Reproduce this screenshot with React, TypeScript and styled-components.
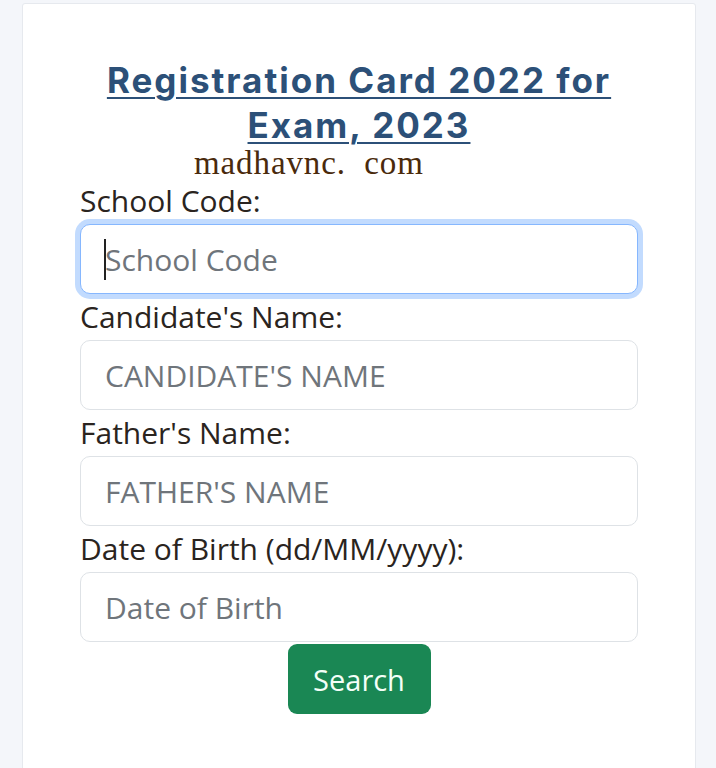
import React from "react";
import styled, { createGlobalStyle } from "styled-components";

const Global = createGlobalStyle`
  html, body { margin: 0; padding: 0; background: #f4f6fa; }
  body { font-family: "Open Sans", "Liberation Sans", sans-serif; }
  * { box-sizing: border-box; }
`;

const Page = styled.div`
  width: 716px;
  height: 768px;
  overflow: hidden;
  padding: 3px 20px 0 22px;
  background: #f4f6fa;
`;

const Card = styled.div`
  background: #ffffff;
  border: 1px solid #e6e9ee;
  border-radius: 3px;
  height: 800px;
  padding: 54px 57px 0 57px;
  display: flex;
  flex-direction: column;
`;

const Title = styled.h1`
  margin: 0;
  text-align: center;
  font-family: Inter, "Open Sans", sans-serif;
  font-weight: 700;
  font-size: 35px;
  line-height: 45px;
  color: #2c5078;
  text-decoration: underline;
  text-decoration-thickness: 2px;
  text-underline-offset: 4px;
  letter-spacing: 2px;
`;

const Watermark = styled.div`
  font-family: "Liberation Serif", "DejaVu Serif", serif;
  font-size: 33px;
  line-height: 30px;
  height: 30px;
  color: #4a2a0c;
  padding-left: 114px;
  white-space: pre;
  letter-spacing: 0.9px;
`;

const Field = styled.div`
  display: flex;
  flex-direction: column;
`;

const Label = styled.label`
  font-size: 30px;
  line-height: 46px;
  color: #2a2420;
`;

const Input = styled.input<{ $focused?: boolean }>`
  width: 100%;
  height: 70px;
  border: 1px solid ${(p) => (p.$focused ? "#86b7fe" : "#dee2e6")};
  border-radius: 10px;
  padding: 0 24px;
  font-family: "Open Sans", sans-serif;
  font-size: 30px;
  color: #212529;
  background: #fff;
  outline: none;
  box-shadow: ${(p) => (p.$focused ? "0 0 0 5px rgba(13,110,253,0.25)" : "none")};
  &::placeholder { color: #6f757b; }
`;

const InputWrap = styled.div`
  position: relative;
`;

const Caret = styled.span`
  position: absolute;
  left: 24px;
  top: 15px;
  width: 2px;
  height: 41px;
  background: #222;
`;

const ButtonRow = styled.div`
  display: flex;
  justify-content: center;
  padding-top: 2px;
`;

const Button = styled.button`
  background: #1a8754;
  color: #f4fff8;
  border: none;
  border-radius: 9px;
  width: 143px;
  height: 70px;
  font-family: "Open Sans", sans-serif;
  font-size: 29px;
`;

export default function App() {
  return (
    <>
      <Global />
      <Page>
        <Card>
          <Title>Registration Card 2022 for Exam, 2023</Title>
          <Watermark>{"madhavnc.  com"}</Watermark>
          <Field>
            <Label>School Code:</Label>
            <InputWrap>
              <Input $focused placeholder="School Code" />
              <Caret />
            </InputWrap>
          </Field>
          <Field>
            <Label>Candidate's Name:</Label>
            <Input placeholder="CANDIDATE'S NAME" />
          </Field>
          <Field>
            <Label>Father's Name:</Label>
            <Input placeholder="FATHER'S NAME" />
          </Field>
          <Field>
            <Label>Date of Birth (dd/MM/yyyy):</Label>
            <Input placeholder="Date of Birth" />
          </Field>
          <ButtonRow>
            <Button>Search</Button>
          </ButtonRow>
        </Card>
      </Page>
    </>
  );
}
